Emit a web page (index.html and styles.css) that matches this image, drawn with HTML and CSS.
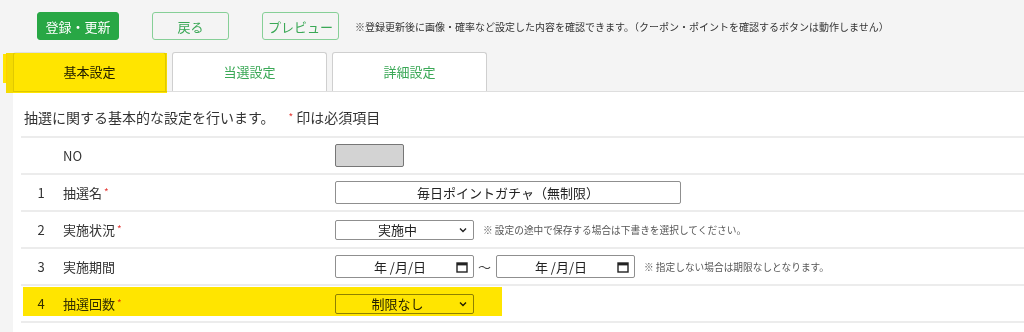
FILE: index.html
```html
<!DOCTYPE html>
<html lang="ja">
<head>
    <meta charset="utf-8">
    <title>抽選設定</title>
    <link rel="stylesheet" href="styles.css">
</head>
<body>
    <div class="toolbar">
        <button class="btn btn-primary">登録・更新</button>
        <button class="btn btn-outline">戻る</button>
        <button class="btn btn-outline">プレビュー</button>
        <span class="toolbar-note">※登録更新後に画像・確率など設定した内容を確認できます。（クーポン・ポイントを確認するボタンは動作しません）</span>
    </div>

    <div class="tabs">
        <div class="tab current">基本設定</div>
        <div class="tab">当選設定</div>
        <div class="tab">詳細設定</div>
    </div>

    <div class="panel">
        <p class="lead">抽選に関する基本的な設定を行います。<span class="lead-req"><span class="req">*</span>印は必須項目</span></p>

        <div class="form-table">
            <div class="row">
                <div class="num"></div>
                <div class="label">NO</div>
                <div class="field"><input class="no-box" type="text" disabled></div>
            </div>
            <div class="row">
                <div class="num">1</div>
                <div class="label">抽選名<span class="req">*</span></div>
                <div class="field"><input class="text-box" type="text" value="毎日ポイントガチャ（無制限）"></div>
            </div>
            <div class="row">
                <div class="num">2</div>
                <div class="label">実施状況<span class="req">*</span></div>
                <div class="field">
                    <div class="select-box"><span>実施中</span><svg width="8" height="6" viewBox="0 0 8 6"><path d="M1 1.5 L4 4.5 L7 1.5" fill="none" stroke="#222" stroke-width="1.4"/></svg></div>
                    <span class="note">※ 設定の途中で保存する場合は下書きを選択してください。</span>
                </div>
            </div>
            <div class="row">
                <div class="num">3</div>
                <div class="label">実施期間</div>
                <div class="field">
                    <div class="date-box"><span>年 /月/日</span><svg width="12" height="12" viewBox="0 0 12 12"><rect x="1" y="2" width="10" height="9" fill="none" stroke="#222" stroke-width="1.4"/><rect x="1" y="2" width="10" height="2.4" fill="#222"/></svg></div>
                    <span class="tilde">〜</span>
                    <div class="date-box"><span>年 /月/日</span><svg width="12" height="12" viewBox="0 0 12 12"><rect x="1" y="2" width="10" height="9" fill="none" stroke="#222" stroke-width="1.4"/><rect x="1" y="2" width="10" height="2.4" fill="#222"/></svg></div>
                    <span class="note">※ 指定しない場合は期限なしとなります。</span>
                </div>
            </div>
            <div class="row marked">
                <div class="num">4</div>
                <div class="label">抽選回数<span class="req">*</span></div>
                <div class="field">
                    <div class="select-box"><span>制限なし</span><svg width="8" height="6" viewBox="0 0 8 6"><path d="M1 1.5 L4 4.5 L7 1.5" fill="none" stroke="#222" stroke-width="1.4"/></svg></div>
                </div>
            </div>
        </div>
    </div>
</body>
</html>
```

FILE: styles.css
```css
body {
    font-family: "Noto Sans CJK JP", "Noto Sans", sans-serif;
    background-color: #f4f4f4;
    color: #333;
    margin: 0;
    padding: 0;
    overflow: hidden;
}
.toolbar {
    display: flex;
    align-items: center;
    padding: 12px 0 0 37px;
    height: 28px;
}
.btn {
    font-family: inherit;
    font-size: 13px;
    height: 28px;
    border-radius: 3px;
    padding: 0;
    margin-right: 33px;
    cursor: pointer;
}
.btn-primary {
    width: 82px;
    background: #28a745;
    color: #ffffff;
    border: 1px solid #28a745;
}
.btn-outline {
    width: 77px;
    background: #f4f4f4;
    color: #3aa856;
    border: 1px solid #86cf97;
}
.btn-outline:last-of-type {
    margin-right: 16px;
}
.toolbar-note {
    font-size: 10px;
    color: #333;
}
.tabs {
    display: flex;
    gap: 5px;
    margin-top: 12px;
    padding-left: 13px;
}
.tab {
    width: 153px;
    height: 38px;
    line-height: 38px;
    text-align: center;
    font-size: 13px;
    color: #3aa856;
    background: #ffffff;
    border: 1px solid #cfcfcf;
    border-bottom: none;
    border-radius: 3px 3px 0 0;
}
.tab.current {
    position: relative;
    width: 151px;
    margin-right: 1px;
    color: #222;
    border-color: #e0e0e0;
}
.tab.current::after {
    content: "";
    position: absolute;
    left: -8px;
    top: 0;
    width: 161px;
    height: 40px;
    background: #ffe500;
    mix-blend-mode: multiply;
}
.tab.current::before {
    content: "";
    position: absolute;
    left: -11px;
    top: 1px;
    width: 4px;
    height: 29px;
    background: #ffe500;
}
.panel {
    background: #ffffff;
    margin-left: 13px;
    border-top: 1px solid #dedede;
    padding-left: 8px;
    height: 245px;
}
.lead {
    margin: 0;
    height: 44px;
    line-height: 50px;
    font-size: 14px;
    color: #333;
    padding-left: 3px;
}
.lead-req {
    margin-left: 12px;
}
.req {
    color: #e53935;
    font-size: 10px;
    margin-left: 2px;
    margin-right: 3px;
    vertical-align: 2px;
}
.form-table {
    border-top: 2px solid #ececec;
}
.row {
    display: flex;
    align-items: center;
    height: 35px;
    border-bottom: 2px solid #ececec;
    font-size: 13px;
    position: relative;
}
.num {
    width: 40px;
    text-align: center;
}
.label {
    width: 274px;
    padding-left: 2px;
    box-sizing: border-box;
}
.field {
    display: flex;
    align-items: center;
}
.no-box {
    width: 69px;
    height: 23px;
    box-sizing: border-box;
    background: #d3d3d3;
    border: 1px solid #767676;
    border-radius: 2px;
}
.text-box {
    width: 346px;
    height: 23px;
    box-sizing: border-box;
    font-family: inherit;
    font-size: 13px;
    text-align: center;
    color: #222;
    border: 1px solid #8f8f8f;
    border-radius: 2px;
    padding: 0;
}
.select-box {
    width: 139px;
    height: 20px;
    box-sizing: border-box;
    display: flex;
    align-items: center;
    border: 1px solid #8f8f8f;
    border-radius: 2px;
    background: #ffffff;
    color: #222;
    font-size: 13px;
    padding: 0 6px 0 0;
}
.select-box span {
    flex: 1;
    text-align: center;
}
.date-box {
    width: 139px;
    height: 23px;
    box-sizing: border-box;
    display: flex;
    align-items: center;
    border: 1px solid #8f8f8f;
    border-radius: 2px;
    background: #ffffff;
    color: #222;
    font-size: 13px;
    padding: 0 5px 0 0;
}
.date-box span {
    flex: 1;
    text-align: center;
    padding-left: 8px;
}
.tilde {
    font-size: 13px;
    margin: 0 5px 0 4px;
    color: #444;
}
.note {
    font-size: 9.7px;
    color: #555;
    margin-left: 9px;
}
.row.marked::after {
    content: "";
    position: absolute;
    left: 2px;
    top: 1px;
    width: 479px;
    height: 29px;
    background: #ffe500;
    mix-blend-mode: multiply;
}
```
